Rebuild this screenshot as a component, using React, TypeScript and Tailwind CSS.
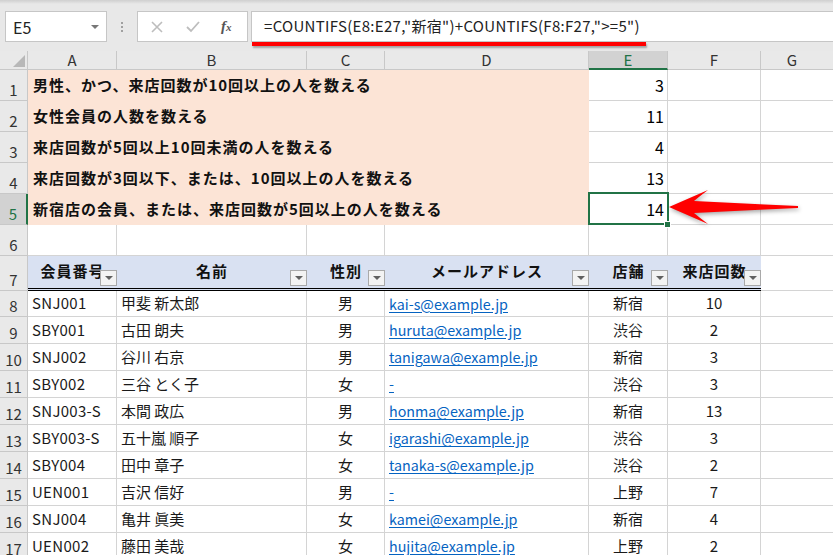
import React from 'react';

const font = { fontFamily: '"Noto Sans CJK JP", "Noto Sans", sans-serif' };

type Member = {
    id: string;
    name: string;
    sex: string;
    mail: string;
    shop: string;
    visits: number;
};

const members: Member[] = [
    { id: 'SNJ001', name: '甲斐 新太郎', sex: '男', mail: 'kai-s@example.jp', shop: '新宿', visits: 10 },
    { id: 'SBY001', name: '古田 朗夫', sex: '男', mail: 'huruta@example.jp', shop: '渋谷', visits: 2 },
    { id: 'SNJ002', name: '谷川 右京', sex: '男', mail: 'tanigawa@example.jp', shop: '新宿', visits: 3 },
    { id: 'SBY002', name: '三谷 とく子', sex: '女', mail: '-', shop: '渋谷', visits: 3 },
    { id: 'SNJ003-S', name: '本間 政広', sex: '男', mail: 'honma@example.jp', shop: '新宿', visits: 13 },
    { id: 'SBY003-S', name: '五十嵐 順子', sex: '女', mail: 'igarashi@example.jp', shop: '渋谷', visits: 3 },
    { id: 'SBY004', name: '田中 章子', sex: '女', mail: 'tanaka-s@example.jp', shop: '渋谷', visits: 2 },
    { id: 'UEN001', name: '吉沢 信好', sex: '男', mail: '-', shop: '上野', visits: 7 },
    { id: 'SNJ004', name: '亀井 眞美', sex: '女', mail: 'kamei@example.jp', shop: '新宿', visits: 4 },
    { id: 'UEN002', name: '藤田 美哉', sex: '女', mail: 'hujita@example.jp', shop: '上野', visits: 2 },
];

const tasks = [
    { label: '男性、かつ、来店回数が10回以上の人を数える', value: 3 },
    { label: '女性会員の人数を数える', value: 11 },
    { label: '来店回数が5回以上10回未満の人を数える', value: 4 },
    { label: '来店回数が3回以下、または、10回以上の人を数える', value: 13 },
    { label: '新宿店の会員、または、来店回数が5回以上の人を数える', value: 14 },
];

const RowHead = ({ n, selected = false, h }: { n: number; selected?: boolean; h: string }) => (
    <div
        className={`${h} w-[28px] shrink-0 flex items-end justify-center text-[15px] leading-[19px] pb-[1px] border-b border-[#c8c8c8] ${
            selected
                ? 'bg-[#d2d2d2] text-[#217346] border-r-2 border-r-[#217346]'
                : 'bg-[#e9e9e9] text-[#333] border-r border-r-[#c8c8c8]'
        }`}
    >
        {n}
    </div>
);

const Filter = () => (
    <div className="absolute right-0 bottom-[2px] w-[17px] h-[16px] border border-[#a9a9a9] bg-[#f3f3f3] flex items-center justify-center">
        <div className="w-0 h-0 border-l-[4px] border-r-[4px] border-t-[4px] border-l-transparent border-r-transparent border-t-[#606060]" />
    </div>
);

const App: React.FC = () => {
    return (
        <div className="w-[833px] h-[555px] overflow-hidden bg-white relative text-black" style={font}>
            {/* formula bar */}
            <div className="h-[51px] bg-[#e8e8e8] relative">
                <div className="h-[4px] bg-gradient-to-b from-[#cfcfcf] to-[#e8e8e8]" />
                <div className="flex items-start pl-[5px] pt-[7px]">
                    <div className="w-[102px] h-[31px] bg-white border border-[#c6c6c6] flex items-center justify-between pl-[7px] pr-[7px]">
                        <span className="text-[16px] text-[#222]">E5</span>
                        <div className="w-0 h-0 border-l-[4px] border-r-[4px] border-t-[4px] border-l-transparent border-r-transparent border-t-[#777]" />
                    </div>
                    <div className="w-[30px] h-[31px] flex flex-col items-center justify-center gap-[2px]">
                        <div className="w-[2px] h-[2px] bg-[#a0a0a0]" />
                        <div className="w-[2px] h-[2px] bg-[#a0a0a0]" />
                        <div className="w-[2px] h-[2px] bg-[#a0a0a0]" />
                    </div>
                    <div className="w-[111px] h-[31px] bg-white border border-[#c6c6c6] flex items-center pl-[11px]">
                        <svg width="14" height="14" viewBox="0 0 14 14" className="ml-[1px]">
                            <path d="M2 2 L12 12 M12 2 L2 12" stroke="#bdbdbd" strokeWidth="1.6" />
                        </svg>
                        <svg width="16" height="14" viewBox="0 0 16 14" className="ml-[21px]">
                            <path d="M2 7 L6 11 L14 2" stroke="#bdbdbd" strokeWidth="1.8" fill="none" />
                        </svg>
                        <span className="ml-[20px] text-[15px] italic font-bold text-[#555]" style={{ fontFamily: '"Liberation Serif", serif' }}>
                            f<span className="text-[11px]">x</span>
                        </span>
                    </div>
                    <div className="flex-1 ml-[3px] h-[31px] bg-white border border-[#c6c6c6] border-r-0 flex items-center pl-[12px]">
                        <span className="text-[15px] text-[#222] tracking-[0.3px]">
                            =COUNTIFS(E8:E27,"新宿")+COUNTIFS(F8:F27,"&gt;=5")
                        </span>
                    </div>
                </div>
                <div className="absolute left-[252px] top-[42px] w-[394px] h-[4px] bg-[#ff0000] shadow-[1px_2px_2px_rgba(0,0,0,0.3)]" />
            </div>

            {/* column headers */}
            <div className="flex h-[19px] text-[15px] leading-[18px] text-[#333]">
                <div className="w-[28px] bg-[#e9e9e9] border-r border-b border-[#c8c8c8] relative">
                    <svg width="12" height="12" className="absolute right-[2px] bottom-[2px]">
                        <polygon points="12,0 12,12 0,12" fill="#b8b8b8" />
                    </svg>
                </div>
                <div className="w-[89px] bg-[#e9e9e9] border-r border-b border-[#c8c8c8] text-center">A</div>
                <div className="w-[190px] bg-[#e9e9e9] border-r border-b border-[#c8c8c8] text-center">B</div>
                <div className="w-[78px] bg-[#e9e9e9] border-r border-b border-[#c8c8c8] text-center">C</div>
                <div className="w-[204px] bg-[#e9e9e9] border-r border-b border-[#c8c8c8] text-center">D</div>
                <div className="w-[79px] bg-[#d2d2d2] border-r border-r-[#c8c8c8] border-b-2 border-b-[#217346] text-center text-[#217346]">E</div>
                <div className="w-[93px] bg-[#e9e9e9] border-r border-b border-[#c8c8c8] text-center">F</div>
                <div className="flex-1 bg-[#e9e9e9] border-b border-[#c8c8c8] text-center pr-[10px]">G</div>
            </div>

            {/* rows 1-5 */}
            {tasks.map((t, i) => (
                <div key={i} className="flex h-[31px]">
                    <RowHead n={i + 1} selected={i === 4} h="h-[31px]" />
                    <div className="w-[561px] bg-[#fce4d6] flex items-center pl-[5px] text-[15px] font-bold tracking-[1px] text-[#111]">
                        {t.label}
                    </div>
                    <div className="w-[79px] border-r border-b border-[#d4d4d4] flex items-center justify-end pr-[3px] text-[16px]">
                        {t.value}
                    </div>
                    <div className="w-[93px] border-r border-b border-[#d4d4d4]" />
                    <div className="flex-1 border-b border-[#d4d4d4]" />
                </div>
            ))}

            {/* row 6 */}
            <div className="flex h-[31px]">
                <RowHead n={6} h="h-[31px]" />
                <div className="w-[89px] border-r border-b border-[#d4d4d4]" />
                <div className="w-[190px] border-r border-b border-[#d4d4d4]" />
                <div className="w-[78px] border-r border-b border-[#d4d4d4]" />
                <div className="w-[204px] border-r border-b border-[#d4d4d4]" />
                <div className="w-[79px] border-r border-b border-[#d4d4d4]" />
                <div className="w-[93px] border-r border-b border-[#d4d4d4]" />
                <div className="flex-1 border-b border-[#d4d4d4]" />
            </div>

            {/* row 7: table header */}
            <div className="flex h-[35px]">
                <RowHead n={7} h="h-[35px]" />
                <div className="w-[733px] flex bg-[#d9e1f2] border-b-[3px] border-double border-black text-[15px] font-bold tracking-[1px] text-[#111]">
                    {[
                        ['会員番号', 'w-[89px]'],
                        ['名前', 'w-[190px]'],
                        ['性別', 'w-[78px]'],
                        ['メールアドレス', 'w-[204px]'],
                        ['店舗', 'w-[79px]'],
                        ['来店回数', 'w-[93px]'],
                    ].map(([label, w]) => (
                        <div key={label} className={`${w} relative flex items-center justify-center pb-[1px]`}>
                            {label}
                            <Filter />
                        </div>
                    ))}
                </div>
                <div className="flex-1 border-b border-[#d4d4d4]" />
            </div>

            {/* data rows */}
            {members.map((m, i) => {
                const h = i === 0 ? 'h-[26px]' : 'h-[27px]';
                return (
                    <div key={m.id} className={`flex ${h} text-[15px] text-[#1a1a1a]`}>
                        <RowHead n={i + 8} h={h} />
                        <div className="w-[89px] border-r border-b border-[#d4d4d4] flex items-center pl-[4px] tracking-[0.3px]">{m.id}</div>
                        <div className="w-[190px] border-r border-b border-[#d4d4d4] flex items-center pl-[4px]">{m.name}</div>
                        <div className="w-[78px] border-r border-b border-[#d4d4d4] flex items-center justify-center">{m.sex}</div>
                        <div className="w-[204px] border-r border-b border-[#d4d4d4] flex items-center pl-[4px]">
                            <span className="text-[14.3px] text-[#0563c1] underline underline-offset-2">{m.mail}</span>
                        </div>
                        <div className="w-[79px] border-r border-b border-[#d4d4d4] flex items-center justify-center">{m.shop}</div>
                        <div className="w-[93px] border-r border-b border-[#d4d4d4] flex items-center justify-center">{m.visits}</div>
                        <div className="flex-1 border-b border-[#d4d4d4]" />
                    </div>
                );
            })}

            {/* active cell E5 */}
            <div className="absolute left-[588px] top-[192px] w-[81px] h-[33px] border-2 border-[#217346]" />
            <div className="absolute left-[664px] top-[221px] w-[7px] h-[7px] bg-[#217346] border border-white" />

            {/* red arrow */}
            <svg
                className="absolute left-[660px] top-[180px] drop-shadow-[1px_2px_2px_rgba(0,0,0,0.35)]"
                width="150"
                height="56"
                viewBox="0 0 150 56"
            >
                <path
                    d="M9 27 L48 10 Q40 16 34 21 L138 26 L138 28 L34 33 Q40 38 48 44 Z"
                    fill="#ff0000"
                />
            </svg>
        </div>
    );
};

export default App;
